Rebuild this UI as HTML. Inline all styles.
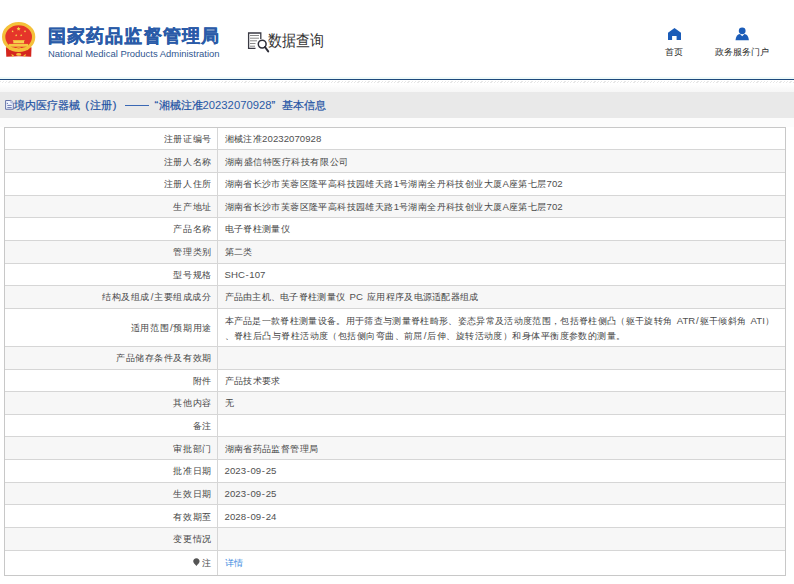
<!DOCTYPE html>
<html><head><meta charset="utf-8">
<style>
html,body{margin:0;padding:0;background:#fff;}
body{width:794px;height:584px;overflow:hidden;position:relative;font-family:"Liberation Sans",sans-serif;}
.abs{position:absolute;}
svg{display:block;}
#title{position:absolute;left:47.6px;top:24.8px;font-size:18px;letter-spacing:1.2px;font-weight:bold;color:#2a5ba8;-webkit-text-stroke:0.35px #2a5ba8;white-space:nowrap;line-height:22px;}
#sub{position:absolute;left:48px;top:48px;font-size:9.45px;color:#30568f;white-space:nowrap;line-height:11px;}
#dq{position:absolute;left:268px;top:31px;font-size:16px;color:#333;line-height:20px;white-space:nowrap;}
.nav{position:absolute;font-size:9px;color:#2a2a2a;line-height:11px;white-space:nowrap;text-align:center;}
#bl{position:absolute;left:0;top:79px;width:794px;height:1.4px;background:#1f4a7c;}
#cy{position:absolute;left:0;top:77px;width:794px;height:2px;background:#eefafa;}
#grad{position:absolute;left:0;top:84px;width:794px;height:8px;background:linear-gradient(#fff,#f6f6f6);}
#dash{position:absolute;left:0;top:81px;width:794px;height:2.2px;background:repeating-linear-gradient(135deg,#d8d8d8 0 0.9px,#fff 0.9px 2.35px);opacity:0.6}
#bc{position:absolute;left:0;top:92px;width:794px;height:26px;background:#e9e9e9;}
#bcb{position:absolute;left:0;top:118px;width:794px;height:9px;background:#fcfcfc;}
.bct{position:absolute;top:97.5px;font-size:11px;color:#1f53a4;-webkit-text-stroke:0.2px #1f53a4;line-height:14px;white-space:nowrap;}
.r{position:absolute;left:4.5px;width:781.0px;}
.hl{position:absolute;left:4.5px;width:781.0px;height:1px;background:#d6d6d6;}
#vline{position:absolute;left:216.9px;top:127.2px;width:1px;height:447.40000000000003px;background:#d6d6d6;}
#tb{position:absolute;left:4.0px;top:126.7px;width:780.0px;height:447.40000000000003px;border:1px solid #c8c8c8;}
.lb{position:absolute;right:582.4px;font-size:9.4px;letter-spacing:0.55px;color:#464646;line-height:14px;white-space:nowrap;text-align:right;}
.vl{position:absolute;left:224.5px;font-size:9.4px;letter-spacing:0.4px;color:#464646;line-height:14px;white-space:nowrap;}
.lnk{color:#3a8ae0;}
.en{letter-spacing:0.05px;font-size:9.6px;word-spacing:1.6px;color:#505050;}
.hy{padding:0 0.6px;}
.sl{padding:0 0.8px;}
.pin{display:inline-block;width:7px;height:8px;margin-right:1.6px;vertical-align:-0.5px;}
</style></head><body>
<div class="abs" id="logo" style="left:0px;top:18px;width:40px;height:42px;">
<svg width="40" height="42" viewBox="0 18 40 42">
<defs><path id="st" d="M0 -1 L0.29 -0.4 L0.95 -0.31 L0.48 0.15 L0.59 0.81 L0 0.5 L-0.59 0.81 L-0.48 0.15 L-0.95 -0.31 L-0.29 -0.4 Z"/></defs>
<path d="M5.9 47.3 L31.5 47.3 L31.2 56.8 Q18.7 55.6 6.3 56.8 Z" fill="#d4261e"/>
<ellipse cx="18.65" cy="37" rx="15" ry="13.3" fill="#e5352a" stroke="#f4c13a" stroke-width="3.3"/>
<path d="M8.9 43.9 H28.1 V46.7 H8.9 Z" fill="#f5c844"/>
<path d="M13.3 40.6 H24.1 V43.3 H13.3 Z" fill="#f7d04e"/>
<path d="M12.9 40.1 H24.5 V41 H12.9 Z" fill="#f2c03c"/>
<path d="M9.5 49.8 Q13 47.2 15.8 49 Q18.7 46.8 21.6 49 Q24.4 47.2 28 49.8" fill="none" stroke="#f4c13a" stroke-width="1.4"/>
<ellipse cx="18.7" cy="54.4" rx="2.6" ry="1.4" fill="#f4c13a"/>
<path d="M11.2 54 L14 55.2 L12.6 57.2 Z M26.2 54 L23.4 55.2 L24.8 57.2 Z" fill="#f4c13a"/>
<use href="#st" transform="translate(18.6 28.9) scale(2.1)" fill="#f7d24a"/>
<use href="#st" transform="translate(12.6 31.3) scale(1.15)" fill="#f7d24a"/>
<use href="#st" transform="translate(25.0 31.3) scale(1.15)" fill="#f7d24a"/>
<use href="#st" transform="translate(16.2 35.3) scale(1.15)" fill="#f7d24a"/>
<use href="#st" transform="translate(21.2 35.3) scale(1.15)" fill="#f7d24a"/>
</svg>
</div>
<div id="title">国家药品监督管理局</div>
<div id="sub">National Medical Products Administration</div>
<div class="abs" style="left:240px;top:28px;width:32px;height:28px;">
<svg width="32" height="28" viewBox="240 28 32 28">
<path d="M255.5 48.3 H248.6 V33 H260.8 V39" fill="none" stroke="#3a3a44" stroke-width="1.3"/>
<path d="M250 35.5h9M250 38.2h9M250 40.8h7M250 43.5h5.5M250 46.2h5" stroke="#8a8a8a" stroke-width="1"/>
<circle cx="262.2" cy="44.1" r="3.9" fill="#fff" stroke="#2e2e38" stroke-width="1.5"/>
<line x1="265" y1="47" x2="268.2" y2="51.4" stroke="#2e2e38" stroke-width="2" stroke-linecap="round"/>
</svg>
</div>
<div id="dq"><span style="display:inline-block;transform:scaleX(0.875);transform-origin:0 0">数据查询</span></div>
<div class="abs" style="left:668px;top:28px;width:13px;height:12px;">
<svg width="13" height="12" viewBox="0 0 13 12"><path d="M6.5 0 L13 4.8 V12 H8.6 V8 H4.1 V12 H0 V4.8 Z" fill="#1b5cb8"/></svg>
</div>
<div class="nav" style="left:654px;top:46.5px;width:40px;">首页</div>
<div class="abs" style="left:735px;top:27px;width:14px;height:14px;">
<svg width="14" height="14" viewBox="0 0 14 14"><circle cx="7.2" cy="3.8" r="3.4" fill="#1b5cb8"/><path d="M0.5 13.2 Q1 7.5 5 7 L7.2 9.3 L9.4 7 Q13.4 7.5 13.9 13.2 Z" fill="#1b5cb8"/></svg>
</div>
<div class="nav" style="left:701px;top:46.5px;width:82px;">政务服务门户</div>
<div id="cy"></div><div id="bl"></div><div id="grad"></div>
<div id="dash"></div>
<div id="bc"></div><div id="bcb"></div>
<div class="abs" style="left:0px;top:96px;width:20px;height:18px;">
<svg width="20" height="18" viewBox="0 96 20 18">
<path d="M5.6 100.5 H10.9 L13.3 102.9 V109.3 H5.6 Z" fill="#f0f4ff" stroke="#6674a8" stroke-width="1"/>
<path d="M10.9 100.5 V102.9 H13.3" fill="#dfe6fb" stroke="#8a96c4" stroke-width="0.6"/>
<path d="M6.8 103.4 h1.2 M7.3 105.4 h4.4 M7.3 107.6 h4.4" stroke="#5a6aa8" stroke-width="0.9"/>
</svg>
</div>
<div class="bct" style="left:14px">境内医疗器械</div>
<div class="bct" style="left:85.2px">(</div>
<div class="bct" style="left:89.8px">注册</div>
<div class="bct" style="left:112.8px">)</div>
<div class="abs" style="left:125.4px;top:104.5px;width:23.3px;height:1px;background:#3a68b4"></div>
<div class="bct" style="left:154.5px">“</div>
<div class="bct" style="left:158.5px">湘械注准</div>
<div class="bct" style="left:202.6px;font-size:11.25px;-webkit-text-stroke:0;color:#2a5aa6">20232070928</div>
<div class="bct" style="left:271.5px">”</div>
<div class="bct" style="left:281.6px">基本信息</div>
<div class="r" style="top:127.20px;height:22.64px;background:#fff"></div>
<div class="r" style="top:149.84px;height:22.64px;background:#f7f7f7"></div>
<div class="r" style="top:172.48px;height:22.64px;background:#fff"></div>
<div class="r" style="top:195.12px;height:22.64px;background:#f7f7f7"></div>
<div class="r" style="top:217.76px;height:22.64px;background:#fff"></div>
<div class="r" style="top:240.40px;height:22.64px;background:#f7f7f7"></div>
<div class="r" style="top:263.04px;height:22.64px;background:#fff"></div>
<div class="r" style="top:285.68px;height:22.64px;background:#f7f7f7"></div>
<div class="r" style="top:308.32px;height:38.08px;background:#fff"></div>
<div class="r" style="top:346.40px;height:22.64px;background:#f7f7f7"></div>
<div class="r" style="top:369.04px;height:22.64px;background:#fff"></div>
<div class="r" style="top:391.68px;height:22.64px;background:#f7f7f7"></div>
<div class="r" style="top:414.32px;height:22.64px;background:#fff"></div>
<div class="r" style="top:436.96px;height:22.64px;background:#f7f7f7"></div>
<div class="r" style="top:459.60px;height:22.64px;background:#fff"></div>
<div class="r" style="top:482.24px;height:22.64px;background:#f7f7f7"></div>
<div class="r" style="top:504.88px;height:22.64px;background:#fff"></div>
<div class="r" style="top:527.52px;height:22.64px;background:#f7f7f7"></div>
<div class="r" style="top:550.16px;height:24.44px;background:#fff"></div>
<div class="hl" style="top:149.34px"></div>
<div class="hl" style="top:171.98px"></div>
<div class="hl" style="top:194.62px"></div>
<div class="hl" style="top:217.26px"></div>
<div class="hl" style="top:239.90px"></div>
<div class="hl" style="top:262.54px"></div>
<div class="hl" style="top:285.18px"></div>
<div class="hl" style="top:307.82px"></div>
<div class="hl" style="top:345.90px"></div>
<div class="hl" style="top:368.54px"></div>
<div class="hl" style="top:391.18px"></div>
<div class="hl" style="top:413.82px"></div>
<div class="hl" style="top:436.46px"></div>
<div class="hl" style="top:459.10px"></div>
<div class="hl" style="top:481.74px"></div>
<div class="hl" style="top:504.38px"></div>
<div class="hl" style="top:527.02px"></div>
<div class="hl" style="top:549.66px"></div>
<div class="lb" style="top:131.92px">注册证编号</div>
<div class="vl" style="top:131.92px">湘械注准<span class="en">20232070928</span></div>
<div class="lb" style="top:154.56px">注册人名称</div>
<div class="vl" style="top:154.56px;letter-spacing:0.55px">湖南盛信特医疗科技有限公司</div>
<div class="lb" style="top:177.20px">注册人住所</div>
<div class="vl" style="top:177.20px">湖南省长沙市芙蓉区隆平高科技园雄天路<span class="en">1</span>号湖南全丹科技创业大厦<span class="en">A</span>座第七层<span class="en">702</span></div>
<div class="lb" style="top:199.84px">生产地址</div>
<div class="vl" style="top:199.84px">湖南省长沙市芙蓉区隆平高科技园雄天路<span class="en">1</span>号湖南全丹科技创业大厦<span class="en">A</span>座第七层<span class="en">702</span></div>
<div class="lb" style="top:222.48px">产品名称</div>
<div class="vl" style="top:222.48px">电子脊柱测量仪</div>
<div class="lb" style="top:245.12px">管理类别</div>
<div class="vl" style="top:245.12px">第二类</div>
<div class="lb" style="top:267.76px">型号规格</div>
<div class="vl" style="top:267.76px"><span class="en">SHC<span class="hy">-</span>107</span></div>
<div class="lb" style="top:290.40px">结构及组成<span class="en"><span class="sl">/</span></span>主要组成成分</div>
<div class="vl" style="top:290.40px;letter-spacing:0.28px">产品由主机、电子脊柱测量仪<span class="en"> PC </span>应用程序及电源适配器组成</div>
<div class="lb" style="top:320.76px">适用范围<span class="en"><span class="sl">/</span></span>预期用途</div>
<div class="vl" style="top:313.82px;letter-spacing:0.33px">本产品是一款脊柱测量设备。用于筛查与测量脊柱畸形、姿态异常及活动度范围，包括脊柱侧凸（躯干旋转角<span class="en"> ATR<span class="sl">/</span></span>躯干倾斜角<span class="en"> ATI</span>）</div>
<div class="vl" style="top:328.92px;letter-spacing:0.45px">、脊柱后凸与脊柱活动度（包括侧向弯曲、前屈<span class="en"><span class="sl">/</span></span>后伸、旋转活动度）和身体平衡度参数的测量。</div>
<div class="lb" style="top:351.12px">产品储存条件及有效期</div>
<div class="lb" style="top:373.76px">附件</div>
<div class="vl" style="top:373.76px">产品技术要求</div>
<div class="lb" style="top:396.40px">其他内容</div>
<div class="vl" style="top:396.40px">无</div>
<div class="lb" style="top:419.04px">备注</div>
<div class="lb" style="top:441.68px">审批部门</div>
<div class="vl" style="top:441.68px">湖南省药品监督管理局</div>
<div class="lb" style="top:464.32px">批准日期</div>
<div class="vl" style="top:464.32px"><span class="en">2023<span class="hy">-</span>09<span class="hy">-</span>25</span></div>
<div class="lb" style="top:486.96px">生效日期</div>
<div class="vl" style="top:486.96px"><span class="en">2023<span class="hy">-</span>09<span class="hy">-</span>25</span></div>
<div class="lb" style="top:509.60px">有效期至</div>
<div class="vl" style="top:509.60px"><span class="en">2028<span class="hy">-</span>09<span class="hy">-</span>24</span></div>
<div class="lb" style="top:532.24px">变更情况</div>
<div class="lb" style="top:555.78px;right:582.7px"><span class="pin"><svg width="7" height="8" viewBox="0 0 7 8"><path d="M3.4 0.2 C5.4 0.2 6.6 1.6 6.6 3.3 C6.6 5 4.6 6.4 3.4 7.9 C2.2 6.4 0.2 5 0.2 3.3 C0.2 1.6 1.4 0.2 3.4 0.2 Z" fill="#555"/></svg></span>注</div>
<div class="vl" style="top:555.78px"><span class="lnk">详情</span></div>
<div id="vline"></div>
<div id="tb"></div>
</body></html>
